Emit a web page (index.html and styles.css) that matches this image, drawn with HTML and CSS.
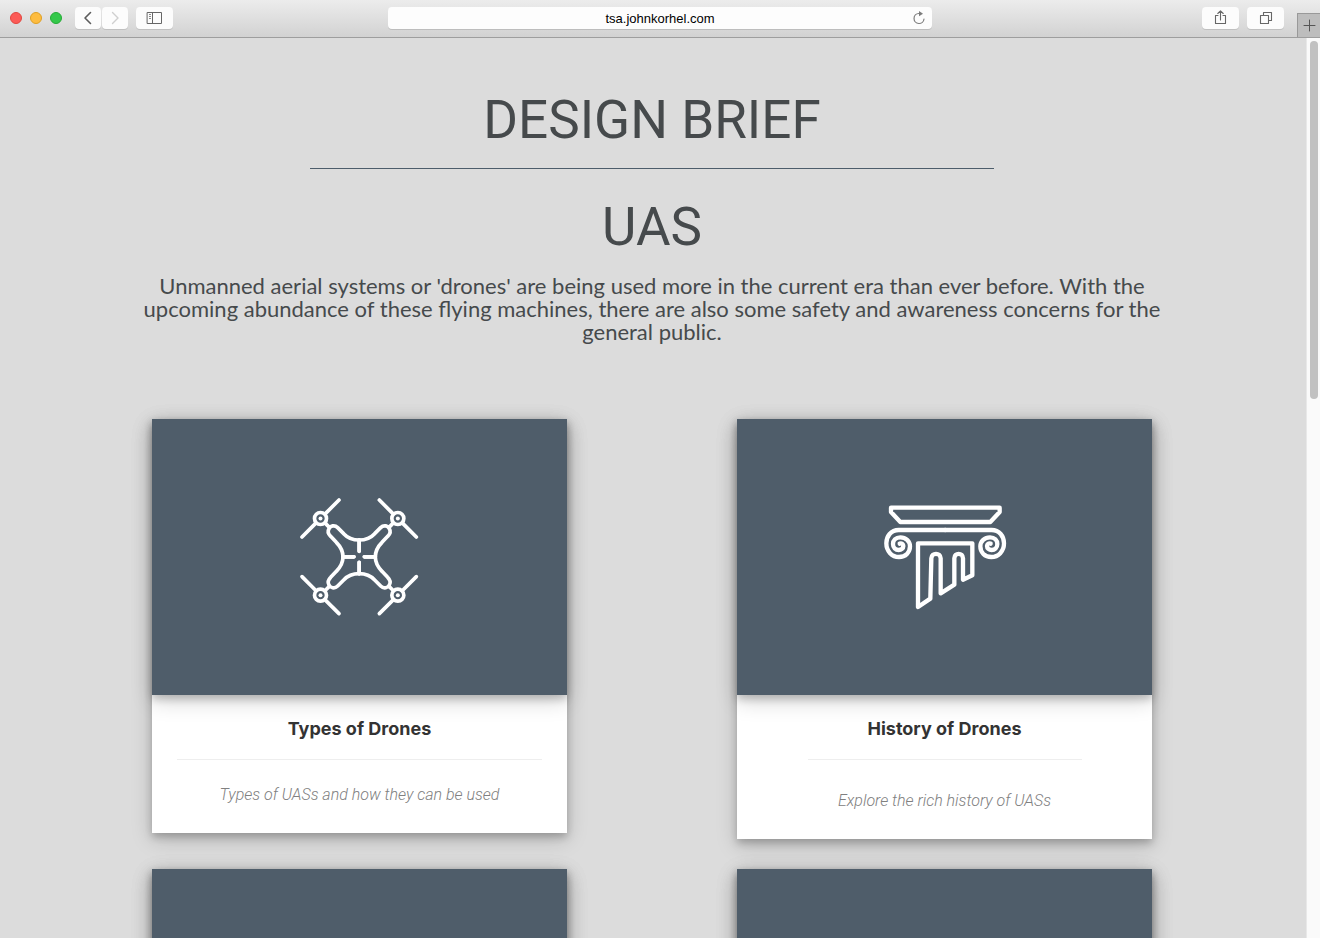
FILE: index.html
```html
<!DOCTYPE html>
<html lang="en">
<head>
<meta charset="utf-8">
<title>Design Brief</title>
<meta name="viewport" content="width=device-width, initial-scale=1">
<link rel="stylesheet" href="styles.css">
</head>
<body>
<header class="toolbar">
  <div class="toolbar-left">
    <div class="lights">
      <button class="light light-red" aria-label="Close"></button>
      <button class="light light-yellow" aria-label="Minimize"></button>
      <button class="light light-green" aria-label="Zoom"></button>
    </div>
    <div class="history">
      <button class="tool tool-small" aria-label="Back"><svg width="26" height="22" viewBox="0 0 26 22"><path d="M15.500 5.500 10 11l5.500 5.500" stroke="#5c5c5c" stroke-width="1.600"/></svg></button>
      <button class="tool tool-small" aria-label="Forward"><svg width="26" height="22" viewBox="0 0 26 22"><path d="M10.500 5.500 16 11l-5.500 5.500" stroke="#cfcfcf" stroke-width="1.400"/></svg></button>
    </div>
    <button class="tool" aria-label="Show sidebar"><svg width="37" height="22" viewBox="0 0 37 22"><path d="M11.500 5.500h14v11h-14zM16.500 5.500v11" stroke="#666"/><path d="M13 7.500h2M13 9.500h2M13 11.500h2" stroke="#888" stroke-linecap="butt"/></svg></button>
  </div>
  <form class="address">
    <input class="url" type="text" value="tsa.johnkorhel.com" aria-label="Address">
    <button class="reload" type="button" aria-label="Reload"><svg width="14" height="16" viewBox="0 0 14 16"><path d="M7.500 3.500H6.800A5 5 0 1 0 12 9" stroke="#7c7c7c" stroke-width="1.200"/><path d="M7 1l4 2.700L7 6.300z" fill="#7c7c7c"/></svg></button>
  </form>
  <div class="toolbar-right">
    <button class="tool" aria-label="Share"><svg width="37" height="22" viewBox="0 0 37 22"><path d="M16 8.500h-2.500v8h10v-8H21M18.500 13V4M15.800 6.500 18.500 3.800l2.700 2.700" stroke="#666" stroke-width="1.100"/></svg></button>
    <button class="tool" aria-label="Show tabs"><svg width="37" height="22" viewBox="0 0 37 22"><path d="M13.500 8.500h8v8h-8zM16.500 8V5.500h8v8H22" stroke="#666" stroke-width="1.100"/></svg></button>
    <button class="new-tab" aria-label="New tab"><svg width="22" height="23" viewBox="0 0 22 23"><path d="M6 11.500h11M11.500 6v11" stroke="#555"/></svg></button>
  </div>
</header>
<div class="viewport">
  <main class="page">
    <div class="container">
      <h1 class="heading">DESIGN BRIEF</h1>
      <hr class="rule">
      <h2 class="heading">UAS</h2>
      <p class="intro">Unmanned aerial systems or 'drones' are being used more in the current era than ever before. With the upcoming abundance of these flying machines, there are also some safety and awareness concerns for the general public.</p>
      <div class="cards">
        <article class="card">
          <div class="cover">
            <svg width="140" height="140" viewBox="0 5 420 420" stroke="#fff" stroke-width="11">
              <defs>
                <g id="arm">
                  <path d="M36 155 76 115M107 84 147 44M107 115l11 11"/>
                  <circle cx="91.500" cy="99.500" r="18"/>
                  <circle cx="91.500" cy="99.500" r="6" fill="#fff" stroke="none"/>
                  <path d="M207.500 164C188 164 172 157 161 145L143 127C133 117 121 122 117 130C112 138 115 146 122 153L139 171C152 184 159 198 159 214.500"/>
                  <path d="M207.500 164v34M159 214.500h33"/>
                </g>
              </defs>
              <use href="#arm"/>
              <use href="#arm" transform="translate(415 0) scale(-1 1)"/>
              <use href="#arm" transform="translate(0 429) scale(1 -1)"/>
              <use href="#arm" transform="translate(415 429) scale(-1 -1)"/>
            </svg>
          </div>
          <div class="caption">
            <h3 class="card-title">Types of Drones</h3>
            <hr class="card-rule">
            <p class="card-text">Types of UASs and how they can be used</p>
          </div>
        </article>
        <article class="card">
          <div class="cover">
            <svg width="140" height="130" viewBox="2 6 420 390" stroke="#fff" stroke-width="13">
              <path d="M50 53H376V66L348 96H78L50 66z"/>
              <path id="scroll" d="M213 120H73C50 120 36 139 36 160C36 184 53 201 74 201C94 201 107 187 107 169C107 153 94 142 78 142C64 142 56 151 56 162C56 173 64 180 73 180C81 180 87 175 87 168C87 162 82 159 76 161"/>
              <use href="#scroll" transform="translate(425 0) scale(-1 1)"/>
              <path d="M131 160H294V256L266 269V205C266 187 240 187 240 205V284L199 310V205C199 187 171 187 171 205L168 326L131 351z"/>
            </svg>
          </div>
          <div class="caption">
            <h3 class="card-title">History of Drones</h3>
            <hr class="card-rule card-rule-short">
            <p class="card-text">Explore the rich history of UASs</p>
          </div>
        </article>
        <article class="card"><div class="cover"></div></article>
        <article class="card"><div class="cover"></div></article>
      </div>
    </div>
  </main>
  <div class="scrollbar"><div class="thumb"></div></div>
</div>
</body>
</html>
```
FILE: styles.css
```css
* { box-sizing: border-box; }
body {
  margin: 0;
  height: 100vh;
  display: flex;
  flex-direction: column;
  overflow: hidden;
  background: #dcdcdc;
  font-family: "Liberation Sans", Arial, sans-serif;
}
svg { display: block; fill: none; stroke-linecap: round; stroke-linejoin: round; }
button { border: 0; padding: 0; background: none; }

.toolbar {
  flex: none;
  height: 38px;
  display: grid;
  grid-template-columns: 1fr minmax(0, 544px) 1fr;
  border-bottom: 1px solid #9e9e9e;
  background: linear-gradient(#ececec, #d2d2d2);
}
.toolbar-left { display: flex; align-items: flex-start; gap: 8px; padding: 7px 0 0 10px; }
.lights { display: flex; gap: 8px; padding: 5px 5px 0 0; }
.light { width: 12px; height: 12px; border-radius: 50%; border: 1px solid; }
.light-red { background: #fc5b57; border-color: #e2463f; }
.light-yellow { background: #fdbc40; border-color: #dfa023; }
.light-green { background: #34c84a; border-color: #24ab35; }
.history { display: flex; gap: 1px; }
.tool {
  width: 37px;
  height: 22px;
  border-radius: 4px;
  background: #fcfcfc;
  box-shadow: 0 1px 0 #c0c0c0;
}
.tool-small { width: 26px; }
.address {
  display: flex;
  align-items: center;
  height: 22px;
  margin-top: 7px;
  padding: 0 6px 0 20px;
  border-radius: 4px;
  background: #fdfdfd;
  box-shadow: 0 1px 0 #bdbdbd;
}
.url {
  flex: 1;
  min-width: 0;
  border: 0;
  padding: 2px 0 0;
  background: none;
  color: #000;
  font: 13px/20px "Liberation Sans", Arial, sans-serif;
  text-align: center;
}
.toolbar-right { display: flex; justify-content: flex-end; gap: 8px; padding-top: 7px; }
.new-tab {
  align-self: flex-end;
  width: 23px;
  height: 24px;
  margin-left: 5px;
  border-left: 1px solid #999;
  border-top: 1px solid #999;
  background: #bdbdbd;
}

.viewport { flex: 1; min-height: 0; display: flex; }
.page { flex: 1; min-width: 0; padding-right: 2px; overflow: hidden; }
.container { max-width: 1170px; margin: 0 auto; padding-top: 52px; }
.heading {
  margin: 0;
  color: #464a4c;
  font: 400 53px/60px Roboto, sans-serif;
  text-align: center;
}
.rule {
  width: 684px;
  max-width: 90%;
  height: 1px;
  margin: 18px auto 28px;
  border: 0;
  background: #4d5d6b;
}
.intro {
  margin: 17px 60px 76px;
  color: #464a4c;
  font: 22px/23px Lato, sans-serif;
  text-align: center;
}
.cards {
  display: grid;
  grid-template-columns: 1fr 1fr;
  gap: 30px 0;
  align-items: start;
  justify-items: center;
}
.card {
  width: 71%;
  background: #fff;
  box-shadow: 0 4px 8px rgba(0, 0, 0, .22), 0 6px 20px rgba(0, 0, 0, .18);
}
.cover {
  display: flex;
  align-items: center;
  justify-content: center;
  height: 276px;
  background: #4f5d6a;
  box-shadow: 0 4px 8px rgba(0, 0, 0, .2), 0 6px 20px rgba(0, 0, 0, .18);
}
.caption { padding: 21px 25px 26px; text-align: center; }
.card-title { margin: 0; color: #333; font: 700 18px/26px Inter, sans-serif; }
.card-rule { height: 1px; margin: 17px 0 23px; border: 0; background: #eee; }
.card-rule-short { width: 75%; margin: 17px auto 29px; }
.card-text { margin: 0; color: #808080; font: italic 300 16px/24px Roboto, sans-serif; }

.scrollbar { flex: none; width: 14px; padding: 3px 2px 0 3px; border-left: 1px solid #e8e8e8; background: #fafafa; }
.thumb { width: 8px; height: 358px; border-radius: 4px; background: #c1c1c1; }
```
